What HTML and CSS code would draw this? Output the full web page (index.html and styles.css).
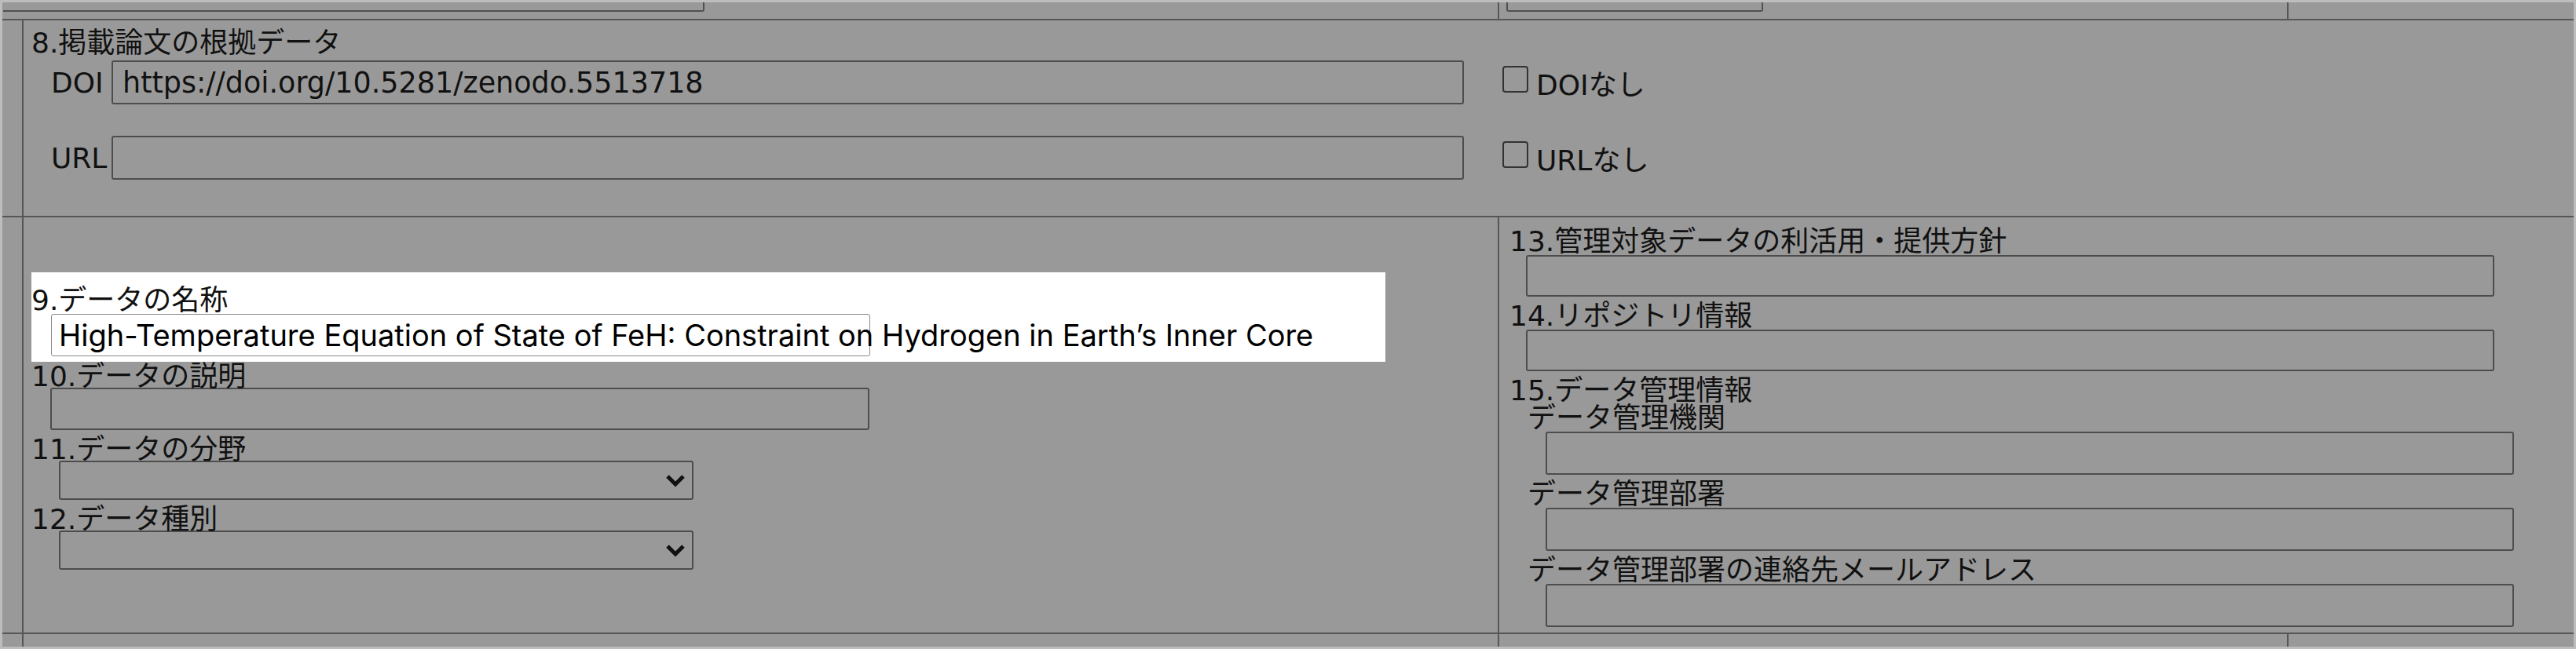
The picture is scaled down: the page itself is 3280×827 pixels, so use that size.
FILE: index.html
```html
<!DOCTYPE html>
<html lang="ja">
<head>
<meta charset="utf-8">
<title>データ管理計画</title>
<link rel="stylesheet" href="styles.css">
</head>
<body>
<div class="frame">
  <div class="sheet">
    <!-- cropped previous row -->
    <div class="cell span-ab"><div class="stub stub-wide"></div></div>
    <div class="cell bl"><div class="stub stub-narrow"></div></div>
    <div class="cell bl"></div>

    <!-- section 8 -->
    <div class="cell bt"></div>
    <div class="cell bl bt span-bcd sec8">
      <div class="label title8">8.掲載論文の根拠データ</div>
      <div class="link-row">
        <span class="link-key">DOI</span>
        <input class="field link-field" type="text" value="https://doi.org/10.5281/zenodo.5513718">
        <label class="check"><input type="checkbox">DOIなし</label>
      </div>
      <div class="link-row url-row">
        <span class="link-key">URL</span>
        <input class="field link-field" type="text" value="">
        <label class="check"><input type="checkbox">URLなし</label>
      </div>
    </div>

    <!-- sections 9-15 -->
    <div class="cell bt"></div>
    <div class="cell bl bt left">
      <div class="hl">
        <div class="label hl-label">9.データの名称</div>
        <div class="field title-field">High-Temperature Equation of State of FeH: Constraint on Hydrogen in Earth’s Inner Core</div>
      </div>
      <div class="label first">10.データの説明</div>
      <input class="field desc-field" type="text" value="">
      <div class="label">11.データの分野</div>
      <div class="select"><svg width="26" height="17" viewBox="0 0 26 17"><path d="M3 3 L13 13 L23 3" fill="none" stroke="#111" stroke-width="5"/></svg></div>
      <div class="label">12.データ種別</div>
      <div class="select"><svg width="26" height="17" viewBox="0 0 26 17"><path d="M3 3 L13 13 L23 3" fill="none" stroke="#111" stroke-width="5"/></svg></div>
    </div>
    <div class="cell bl bt span-cd right">
      <div class="label first">13.管理対象データの利活用・提供方針</div>
      <input class="field" type="text" value="">
      <div class="label">14.リポジトリ情報</div>
      <input class="field" type="text" value="">
      <div class="label">15.データ管理情報</div>
      <div class="sub">
        <div class="label sub-first">データ管理機関</div>
        <input class="field" type="text" value="">
        <div class="label">データ管理部署</div>
        <input class="field" type="text" value="">
        <div class="label">データ管理部署の連絡先メールアドレス</div>
        <input class="field" type="text" value="">
      </div>
    </div>

    <!-- cropped next row -->
    <div class="cell bt"></div>
    <div class="cell bl bt"></div>
    <div class="cell bl bt"></div>
    <div class="cell bl bt"></div>
  </div>
</div>
</body>
</html>
```

FILE: styles.css
```css
* { box-sizing: border-box; }

html, body {
  margin: 0;
  padding: 0;
}

body {
  width: 3280px;
  height: 827px;
  overflow: hidden;
  background: #999999;
  font-family: "DejaVu Sans", "Noto Sans CJK JP", sans-serif;
  font-size: 36px;
  color: #111111;
}

.frame {
  width: 3280px;
  height: 827px;
  border: 3px solid #bdbdbd;
  background: #999999;
}

.sheet {
  display: grid;
  grid-template-columns: 25px 1879px 1005px 365px;
  grid-template-rows: 21px 251px 531px 18px;
}

.cell { min-width: 0; }
.bl { border-left: 2px solid #565656; }
.bt { border-top: 2px solid #565656; }
.span-ab { grid-column: 1 / 3; }
.span-bcd { grid-column: 2 / 5; }
.span-cd { grid-column: 3 / 5; }

/* stubs of the row above */
.stub {
  height: 12px;
  border: 2px solid #505050;
  border-top: none;
  border-radius: 0 0 3px 3px;
}
.stub-wide { margin-left: 1px; width: 893px; border-left: none; border-radius: 0 0 3px 0; }
.stub-narrow { margin-left: 9px; width: 327px; }

/* generic */
.label {
  display: block;
  height: 35px;
  line-height: 36px;
  white-space: nowrap;
}

.field {
  display: block;
  margin: 0;
  border: 2px solid #4d4d4d;
  border-radius: 3px;
  background: transparent;
  font: inherit;
  color: #111111;
  padding: 0 12px;
  outline: none;
}

/* section 8 */
.sec8 { padding-top: 11px; }
.title8 { margin-left: 10px; height: 36px; }

.link-row {
  display: flex;
  align-items: center;
  margin: 4px 0 0 35px;
  height: 56px;
}
.url-row { margin-top: 40px; }
.link-key { width: 77px; }
.link-field { width: 1722px; height: 100%; font-size: 36.5px; }

.check {
  display: flex;
  align-items: center;
  margin-left: 49px;
  white-space: nowrap;
}
.check input {
  appearance: none;
  -webkit-appearance: none;
  width: 33px;
  height: 34px;
  margin: 0 10px 9px 0;
  border: 2px solid #333333;
  border-radius: 4px;
  background: transparent;
}

/* left column */
.hl {
  margin: 70px 0 0 10px;
  width: 1724px;
  height: 114px;
  background: #ffffff;
  padding-top: 18px;
}
.left .hl .hl-label { margin: 0; height: 35px; }

.title-field {
  margin-left: 25px;
  width: 1043px;
  height: 54px;
  border: 1px solid #8a8a8a;
  border-radius: 3px;
  background: #ffffff;
  padding: 0 0 0 9px;
  display: flex;
  align-items: center;
  white-space: nowrap;
  overflow: visible;
  font-family: "Inter", "Lato", sans-serif;
  font-size: 38px;
  color: #000000;
}

.left .label {
  margin: 7px 0 0 10px;
  height: 32px;
}
.left .label.first { margin-top: 1px; }

.desc-field {
  margin-left: 34px;
  width: 1043px;
  height: 54px;
}

.select {
  margin-left: 45px;
  width: 808px;
  height: 50px;
  border: 2px solid #4d4d4d;
  border-radius: 3px;
  display: flex;
  align-items: center;
  justify-content: flex-end;
  padding-right: 8px;
}
.select svg { display: block; }

/* right column */
.right { padding-top: 13px; }
.right .label { margin: 7px 0 0 13px; }
.right .label.first { margin-top: 0; }
.right .field {
  margin-left: 34px;
  width: 1233px;
  height: 53px;
}

.right .sub .label { margin-left: 36px; }
.right .sub .label.sub-first { margin-top: 0; }
.right .sub .field {
  margin-left: 59px;
  height: 55px;
}
```
